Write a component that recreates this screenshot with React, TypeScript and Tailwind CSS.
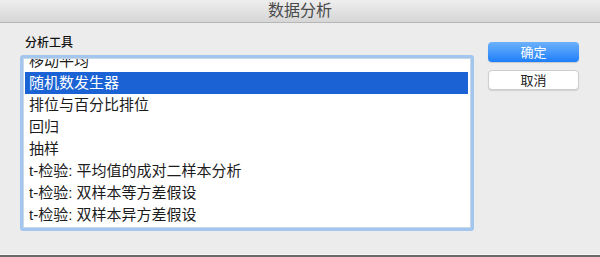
import React from 'react';

const tools = [
  '移动平均',
  '随机数发生器',
  '排位与百分比排位',
  '回归',
  '抽样',
  't-检验: 平均值的成对二样本分析',
  't-检验: 双样本等方差假设',
  't-检验: 双样本异方差假设',
];

export default function App() {
  const selected = 1;

  return (
    <div
      className="w-[600px] h-[257px] flex flex-col bg-[#ececec] overflow-hidden"
      style={{ fontFamily: '"Liberation Sans", "Noto Sans CJK SC", sans-serif' }}
    >
      {/* title bar */}
      <div className="h-[23px] shrink-0 flex items-center justify-center bg-gradient-to-b from-[#eeeeee] to-[#d6d6d6] border-b border-[#b5b5b5]">
        <span className="text-[16px] leading-none text-[#4a4a4a]">数据分析</span>
      </div>

      <div className="flex-1 flex pl-[20px] pt-[12px]">
        <div className="w-[454px] flex flex-col">
          <div className="pl-[5px] text-[12px] leading-[16px] font-medium text-[#111] mb-[4px]">分析工具</div>
          <div className="h-[176px] rounded-[3px] border-[3px] border-[#a3c6ef] bg-white">
            <div className="h-full border border-[#c9d6e6] overflow-hidden pl-px pr-[2px]">
              {/* list is scrolled a little: first row is cut at the top */}
              <div className="-mt-[9px]">
                {tools.map((t, i) => (
                  <div
                    key={t}
                    className={
                      i === selected
                        ? 'h-[22px] flex items-center pl-[4px] text-[15px] text-white bg-[#1b63d4]'
                        : 'h-[22px] flex items-center pl-[4px] text-[15px] text-[#1c1c1c]'
                    }
                  >
                    {t}
                  </div>
                ))}
              </div>
            </div>
          </div>
        </div>

        <div className="ml-[14px] pt-[7px] flex flex-col gap-[8px]">
          <button className="w-[91px] h-[20px] rounded-[4px] bg-gradient-to-b from-[#6bb1fb] to-[#1a7ef9] text-white text-[13px] leading-none shadow-[0_1px_1px_rgba(0,0,0,0.15)]">
            确定
          </button>
          <button className="w-[91px] h-[20px] rounded-[4px] bg-white border border-[#cdcdcd] text-[#222] text-[13px] leading-none shadow-[0_1px_1px_rgba(0,0,0,0.12)]">
            取消
          </button>
        </div>
      </div>

      {/* window bottom edge */}
      <div className="h-px shrink-0 bg-[#f6f6f6]" />
      <div className="h-[2px] shrink-0 bg-[#6a6a6a]" />
    </div>
  );
}
